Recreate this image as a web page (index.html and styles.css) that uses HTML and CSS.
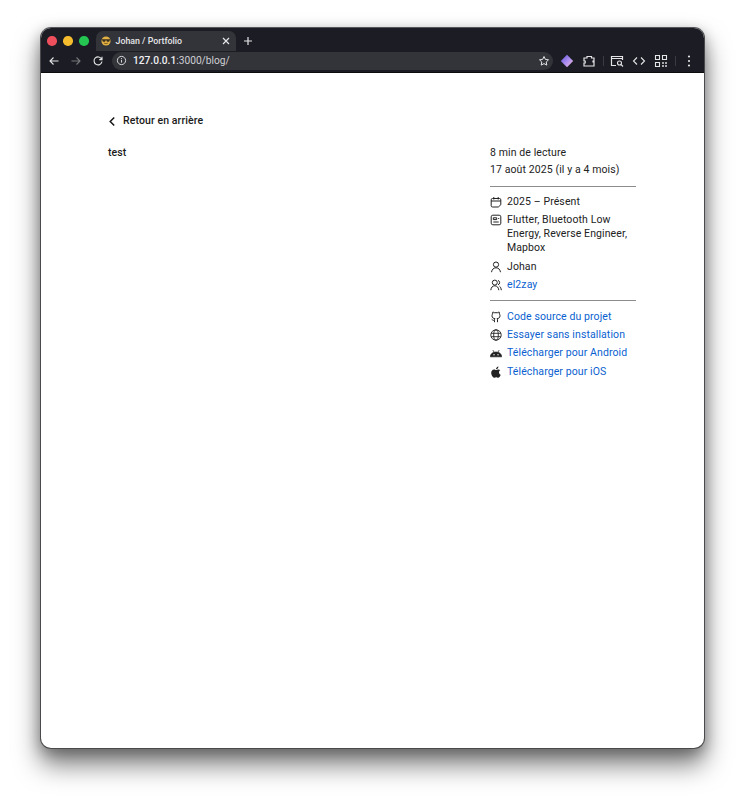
FILE: index.html
```html
<!DOCTYPE html>
<html lang="fr">
<head>
<meta charset="utf-8">
<title>Johan / Portfolio</title>
<link rel="stylesheet" href="styles.css">
</head>
<body>
<div class="window">
  <div class="tabstrip">
    <div class="lights"><i class="light red"></i><i class="light yellow"></i><i class="light green"></i></div>
    <div class="tab">
      <svg class="favicon" viewBox="0 0 12 12"><circle cx="6" cy="6" r="5.500" fill="#e3b044"/><path d="M.8 3.800h10.400v1.300l-1 .2-.4 1.500H7.200L6.300 5h-.6l-.9 1.800H2.200l-.4-1.500-1-.2z" fill="#3d3220"/><path d="M3.500 8.500q2.500 1.400 5 0" fill="none" stroke="#6b4a1a" stroke-width=".9"/></svg>
      <span class="tab-title">Johan / Portfolio</span>
      <svg class="tab-close" viewBox="0 0 10 10"><path d="M2 2l6 6M8 2l-6 6" stroke="#e6e6e8" stroke-width="1.200" fill="none"/></svg>
    </div>
    <svg class="new-tab" viewBox="0 0 10 10"><path d="M5 1v8M1 5h8" stroke="#e6e6e8" stroke-width="1.200" fill="none"/></svg>
  </div>
  <div class="toolbar">
    <svg class="tool" viewBox="0 0 12 12"><path d="M10.500 6H2M5.500 2.500L2 6l3.500 3.500" stroke="#e4e4e6" stroke-width="1.100" fill="none"/></svg>
    <svg class="tool" viewBox="0 0 12 12"><path d="M1.500 6H10M6.500 2.500L10 6l-3.500 3.500" stroke="#77787c" stroke-width="1.100" fill="none"/></svg>
    <svg class="tool" viewBox="0 0 12 12"><path d="M9.700 4.200A4 4 0 1 0 10 6.500M10 1.800v2.800H7.200" stroke="#e4e4e6" stroke-width="1.100" fill="none"/></svg>
    <div class="omnibox">
      <svg class="info" viewBox="0 0 12 12"><circle cx="6" cy="6" r="4.500" stroke="#e4e4e6" fill="none"/><path d="M6 5.300v3M6 3.400v1" stroke="#e4e4e6" fill="none"/></svg>
      <span class="url"><b>127.0.0.1</b>:3000/blog/</span>
      <svg class="star" viewBox="0 0 12 12"><path d="M6 1.500l1.400 2.900 3.100.4-2.300 2.200.6 3.100L6 8.600 3.200 10.100l.6-3.100L1.500 4.800l3.100-.4z" stroke="#e4e4e6" fill="none"/></svg>
    </div>
    <div class="ext-group">
      <svg class="ext" viewBox="0 0 14 14"><defs><linearGradient id="gem" x1="0" y1="0" x2="1" y2="1"><stop offset="0" stop-color="#5f50d8"/><stop offset=".5" stop-color="#a98cf0"/><stop offset="1" stop-color="#f6c0d8"/></linearGradient></defs><path d="M7 .8L13.200 7 7 13.200.8 7z" fill="url(#gem)"/></svg>
      <svg class="ext" viewBox="0 0 14 14"><path d="M2 4h3V2.500h4.500V4H12v3h-1v.8h1V12H2V9h1.200V7H2z" stroke="#e4e4e6" stroke-width="1.200" fill="none"/></svg>
      <span class="sep"></span>
      <svg class="ext" viewBox="0 0 14 14"><path d="M6 11.500H1.500v-9h11V6M1.500 4.500h11" stroke="#e4e4e6" stroke-width="1.200" fill="none"/><circle cx="9.500" cy="9" r="2" stroke="#e4e4e6" stroke-width="1.100" fill="none"/><path d="M11 10.500l2 2" stroke="#e4e4e6" stroke-width="1.100"/></svg>
      <svg class="ext" viewBox="0 0 14 14"><path d="M5 3.500L1.500 7 5 10.500M9 3.500L12.500 7 9 10.500" stroke="#e4e4e6" stroke-width="1.100" fill="none"/></svg>
      <svg class="ext" viewBox="0 0 14 14"><path d="M1.500 1.500h4v4h-4zM8.500 1.500h4v4h-4zM1.500 8.500h4v4h-4z" stroke="#e4e4e6" stroke-width="1.100" fill="none"/><path d="M8 8h2v2H8zM11 8h2v2h-2zM8 11h2v2H8zM11 11h2v2h-2z" fill="#a8a8ac"/></svg>
      <span class="sep"></span>
      <svg class="ext" viewBox="0 0 14 14"><circle cx="7" cy="2.500" r="1.100" fill="#e4e4e6"/><circle cx="7" cy="7" r="1.100" fill="#e4e4e6"/><circle cx="7" cy="11.500" r="1.100" fill="#e4e4e6"/></svg>
    </div>
  </div>
  <main class="page">
    <a class="back">
      <svg class="back-icon" viewBox="0 0 9 12"><path d="M7 1.500L2.500 6 7 10.500" stroke="#1a1a1a" stroke-width="1.700" fill="none"/></svg>
      <span>Retour en arrière</span>
    </a>
    <div class="columns">
      <article class="content">test</article>
      <aside class="sidebar">
        <div class="reading">
          <div>8 min de lecture</div>
          <div>17 août 2025 (il y a 4 mois)</div>
        </div>
        <hr class="rule">
        <ul class="meta">
          <li><svg class="icon" viewBox="0 0 12 12"><path d="M2.500 2.500h7a1.300 1.300 0 0 1 1.300 1.300v5L8.300 11H2.500a1.300 1.300 0 0 1-1.300-1.300V3.800a1.300 1.300 0 0 1 1.300-1.300zM1.200 5h9.600M3.800 1v2.500M8.200 1v2.500" stroke="#222" fill="none"/></svg><span>2025 – Présent</span></li>
          <li><svg class="icon" viewBox="0 0 12 12"><rect x="1.200" y="1.200" width="9.600" height="9.600" rx="1.600" stroke="#222" fill="none"/><path d="M3.300 3.800h3.400v1.800H3.300zM3.300 8h5.400M8.700 4v1" stroke="#222" fill="none"/></svg><span>Flutter, Bluetooth Low Energy, Reverse Engineer, Mapbox</span></li>
          <li><svg class="icon" viewBox="0 0 12 12"><circle cx="6" cy="3.600" r="2.600" stroke="#222" fill="none"/><path d="M1.500 11.200c.4-2.900 2.200-4.400 4.500-4.400s4.100 1.500 4.500 4.400" stroke="#222" fill="none"/></svg><span>Johan</span></li>
          <li><svg class="icon" viewBox="0 0 12 12"><circle cx="4.800" cy="3.600" r="2.500" stroke="#222" fill="none"/><path d="M.8 11.200c.3-2.900 1.800-4.400 4-4.400s3.700 1.500 4 4.400M8 1.400a2.300 2.300 0 0 1 0 4.400M9.500 7.200c1 .7 1.600 2 1.800 4" stroke="#222" fill="none"/></svg><a class="link">el2zay</a></li>
        </ul>
        <hr class="rule">
        <ul class="meta">
          <li><svg class="icon" viewBox="0 0 12 12"><path d="M4.500 11.200V9.300c-1.900.5-2-.8-2.800-1M7.500 11.200V9c.1-.7-.2-1-.5-1.300 1.700-.2 3-1 3-3 0-.7-.2-1.300-.7-1.800.2-.6.200-1.200-.1-1.800-.7 0-1.300.3-1.900.7a6 6 0 0 0-2.600 0c-.6-.4-1.200-.7-1.900-.7-.3.6-.3 1.200-.1 1.800-.5.500-.7 1.100-.7 1.800 0 2 1.300 2.800 3 3-.3.300-.6.700-.5 1.300" stroke="#222" fill="none"/></svg><a class="link">Code source du projet</a></li>
          <li><svg class="icon" viewBox="0 0 12 12"><circle cx="6" cy="6" r="5.200" stroke="#222" fill="none" stroke-width=".9"/><ellipse cx="6" cy="6" rx="2.300" ry="5.200" stroke="#222" fill="none" stroke-width=".9"/><path d="M1.200 4.300h9.600M1.200 7.700h9.600" stroke="#222" stroke-width=".9"/></svg><a class="link">Essayer sans installation</a></li>
          <li><svg class="icon" viewBox="0 0 12 12"><path d="M.3 9.800C.5 7 2.600 5 6 5s5.500 2 5.700 4.800zM2.800 3.000l1.300 2.300M9.200 3.000L7.900 5.300" stroke="#222" stroke-width=".7" fill="#222"/><circle cx="4" cy="7.700" r=".7" fill="#fff"/><circle cx="8" cy="7.700" r=".7" fill="#fff"/></svg><a class="link">Télécharger pour Android</a></li>
          <li><svg class="icon" viewBox="0 0 12 12"><path d="M8.500 3.400c-1 0-1.600.6-2.300.6S5 3.400 4 3.400C2.500 3.400 1.200 4.700 1.200 6.800c0 2.400 1.800 5 3.100 5 .7 0 1.100-.5 1.900-.5s1.100.5 1.900.5c1.200 0 2.300-2 2.600-3.100-1-.4-1.700-1.300-1.700-2.300 0-.9.500-1.700 1.300-2.100-.5-.5-1-.9-1.800-.9zM6 3.200C6 1.800 7.100.5 8.400.4 8.500 1.900 7.400 3.100 6 3.200z" fill="#222"/></svg><a class="link">Télécharger pour iOS</a></li>
        </ul>
      </aside>
    </div>
  </main>
</div>
</body>
</html>
```

FILE: styles.css
```css
* { box-sizing: border-box; }
html, body { margin: 0; height: 100%; background: #fff; overflow: hidden; }
body { padding: 27px 0 0 39.500px; font-family: Roboto, "Liberation Sans", sans-serif; color: #1a1a1a; }
.window {
  width: 665px;
  height: 722px;
  background: #fff;
  border: 1px solid #4a4a4c;
  border-top-color: #55565a;
  border-radius: 11px;
  overflow: hidden;
  box-shadow: 0 16px 26px rgba(0, 0, 0, .5), 0 4px 14px rgba(0, 0, 0, .28);
  display: flex;
  flex-direction: column;
}
.tabstrip {
  height: 23px;
  padding: 3px 0 0 6.500px;
  background: #1c1d24;
  display: flex;
  align-items: center;
  flex: none;
}
.lights { display: flex; gap: 6.500px; margin-right: 7px; }
.light { width: 9.500px; height: 9.500px; border-radius: 50%; display: block; }
.red { background: #ed4f5c; }
.yellow { background: #f5bd2e; }
.green { background: #25c552; }
.tab {
  width: 140px;
  height: 20px;
  background: #33343a;
  border-radius: 7px 7px 0 0;
  display: flex;
  align-items: center;
  padding: 0 5px;
  gap: 5px;
}
.favicon { width: 10px; height: 10px; flex: none; }
.tab-title { flex: 1; font-size: 8.800px; font-weight: 500; color: #e6e6e8; white-space: nowrap; }
.tab-close { width: 10px; height: 10px; flex: none; }
.new-tab { width: 10px; height: 10px; margin-left: 7px; }
.toolbar {
  height: 22px;
  flex: none;
  background: #1c1d24;
  border-bottom: 1px solid #0c0c0e;
  display: flex;
  align-items: center;
  padding: 0 0 2px 7.500px;
}
.tool { width: 12px; height: 12px; margin-right: 10px; flex: none; }
.tool + .omnibox { margin-left: -2px; }
.omnibox {
  width: 441px;
  height: 18px;
  border-radius: 9px;
  background: #33343a;
  display: flex;
  align-items: center;
  padding: 0 3px 0 4px;
  gap: 6px;
  flex: none;
}
.info { width: 11px; height: 11px; flex: none; }
.url { flex: 1; font-size: 10.200px; color: #cfcfd3; }
.url b { font-weight: 500; color: #f0f0f2; }
.star { width: 12px; height: 12px; }
.ext-group { display: flex; align-items: center; gap: 8px; margin-left: 7px; }
.ext { width: 14px; height: 14px; flex: none; }
.sep { width: 1px; height: 10px; background: #3a3b40; margin: 0 -1.500px; }
.page { flex: 1; padding: 41px 67.500px 0; }
.back { display: flex; align-items: center; gap: 7px; font-size: 10.500px; font-weight: 500; line-height: 14px; letter-spacing: .1px; }
.back-icon { width: 8px; height: 11px; flex: none; }
.columns { display: flex; justify-content: space-between; margin-top: 18px; }
.content { font-size: 10.500px; font-weight: 500; line-height: 14px; letter-spacing: .1px; }
.sidebar { width: 146px; flex: none; font-size: 10.500px; line-height: 14px; color: #222; letter-spacing: .1px; }
.reading { display: flex; flex-direction: column; gap: 3px; }
.rule { border: 0; height: 1px; background: #8c8c8c; margin: 8.500px 0; }
.meta { list-style: none; margin: 0; padding: 0; display: flex; flex-direction: column; gap: 4.300px; }
.meta li { display: flex; gap: 5px; }
.icon { width: 12px; height: 14px; flex: none; padding: 1px 0; }
.link { color: #0a5fd0; font-weight: 400; }
```
